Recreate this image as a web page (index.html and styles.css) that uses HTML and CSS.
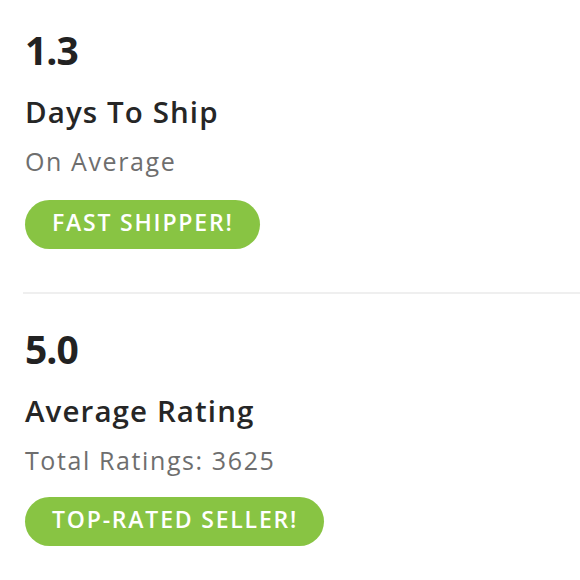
FILE: index.html
```html
<!DOCTYPE html>
<html>
<head>
<meta charset="utf-8">
<link rel="stylesheet" href="styles.css">
</head>
<body>
<div class="stats">
  <section class="stat">
    <div class="value">1.3</div>
    <div class="label">Days To Ship</div>
    <div class="sub">On Average</div>
    <span class="badge">FAST SHIPPER!</span>
  </section>
  <hr class="divider">
  <section class="stat">
    <div class="value">5.0</div>
    <div class="label">Average Rating</div>
    <div class="sub">Total Ratings: 3625</div>
    <span class="badge">TOP-RATED SELLER!</span>
  </section>
</div>
</body>
</html>
```
FILE: styles.css
```css
html, body {
  margin: 0;
  padding: 0;
  background: #fff;
}
body {
  font-family: "Open Sans", Lato, sans-serif;
  color: #222;
}
.stats {
  padding: 26px 0 0 25px;
  display: flex;
  flex-direction: column;
}
.stat {
  display: flex;
  flex-direction: column;
  align-items: flex-start;
}
.value {
  font-size: 39px;
  font-weight: 700;
  line-height: 48px;
  letter-spacing: -1px;
  color: #222;
}
.label {
  margin-top: 20px;
  font-size: 29.5px;
  font-weight: 600;
  line-height: 36px;
  letter-spacing: 1.1px;
  color: #262626;
}
.sub {
  margin-top: 16px;
  font-size: 25px;
  font-weight: 400;
  line-height: 30px;
  letter-spacing: 1.6px;
  color: #6e6e6e;
}
.badge {
  margin-top: 24px;
  display: inline-block;
  box-sizing: border-box;
  background: #88c443;
  color: #fff;
  font-size: 23px;
  font-weight: 600;
  line-height: 45px;
  height: 49px;
  padding: 0 26px 4px 27px;
  border-radius: 25px;
  letter-spacing: 1.8px;
}
.stat + .divider + .stat .badge {
  margin-top: 22px;
}
.divider {
  margin: 43px 0 31px -2px;
  border: 0;
  height: 2px;
  background: #efefef;
}
```
